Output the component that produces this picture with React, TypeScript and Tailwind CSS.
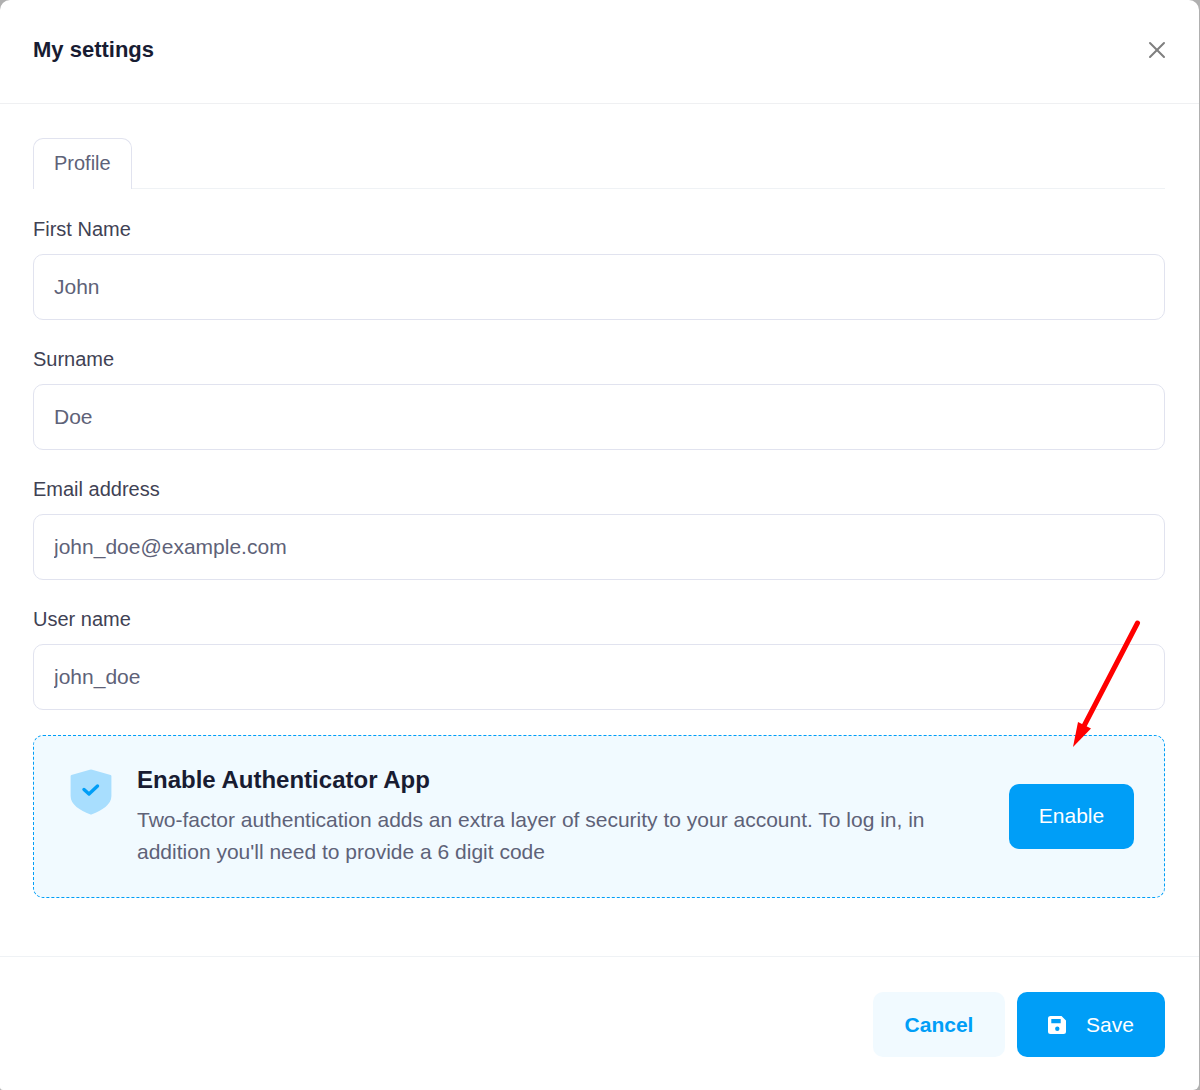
import { X } from "lucide-react";

type FieldProps = { id: string; label: string; value: string; type?: string };

function Field({ id, label, value, type = "text" }: FieldProps) {
  return (
    <div className="flex flex-col gap-2.5">
      <label htmlFor={id} className="text-[20px] leading-[30px] text-[#3f4254]">
        {label}
      </label>
      <input
        id={id}
        type={type}
        defaultValue={value}
        className="h-[66px] w-full rounded-[10px] border border-[#e1e3ef] bg-white px-5 text-[21px] text-[#5e6278] outline-none"
      />
    </div>
  );
}

function ShieldIcon() {
  return (
    <svg viewBox="0 0 42 46" className="h-[46px] w-[42px] shrink-0" aria-hidden="true">
      <path
        d="M.6 7Q.6 6.200 1.400 5.900L19.800 .7Q21 .3 22.200 .7L40.600 5.900Q41.400 6.200 41.400 7V27C41.400 36 32 41 22 45.300Q21 45.800 20 45.300C10 41 .6 36 .6 27Z"
        fill="#a8defe"
      />
      <path d="M14 20.500 19 25 27.500 17" fill="none" stroke="#009ef7" strokeWidth="3.400" strokeLinecap="round" strokeLinejoin="round" />
    </svg>
  );
}

function SaveIcon() {
  return (
    <svg viewBox="0 0 18 18" className="size-[18px]" aria-hidden="true">
      <path
        fill="currentColor"
        fillRule="evenodd"
        d="M2.500 0H13.500L18 4.500V15.500A2.500 2.500 0 0 1 15.500 18H2.500A2.500 2.500 0 0 1 0 15.500V2.500A2.500 2.500 0 0 1 2.500 0ZM3.300 3V7.300H12.700V3ZM9.300 10.600A2.200 2.200 0 1 0 9.300 15A2.200 2.200 0 1 0 9.300 10.600Z"
      />
    </svg>
  );
}

function PointerArrow() {
  return (
    <svg viewBox="0 0 70 128" className="pointer-events-none absolute right-[23px] -top-[117px] h-[128px] w-[70px]" aria-hidden="true">
      <path d="M66.500 4 13.500 106" stroke="#ff0000" strokeWidth="5" strokeLinecap="round" />
      <path d="M2 128 7 103 20 109.500Z" fill="#ff0000" />
    </svg>
  );
}

export default function App() {
  return (
    <div className="min-h-screen bg-[#b0b0b0] pr-px font-['Liberation_Sans',Arial,sans-serif]">
      <main className="flex min-h-screen flex-col rounded-t-[10px] rounded-br-[6px] rounded-bl-[3px] bg-white">
        <header className="flex h-[104px] items-center justify-between border-b border-[#eff0f2] pr-[34px] pl-[33px] pb-1">
          <h1 className="text-[22px] leading-7 font-bold text-[#181c32]">My settings</h1>
          <button type="button" aria-label="Close" className="-mr-1.5 text-[#7f7f7f]">
            <X className="size-7" strokeWidth={1.7} />
          </button>
        </header>

        <form className="flex flex-1 flex-col" onSubmit={(e) => e.preventDefault()}>
          <div className="flex-1 pr-[34px] pl-[33px] pt-[34px] pb-[58px]">
            <div role="tablist" className="flex border-b border-[#eff2f5]">
              <button
                type="button"
                role="tab"
                aria-selected="true"
                className="-mb-px h-[51px] rounded-t-[10px] border border-b-0 border-[#e1e3ef] bg-white px-5 pb-0.5 text-[20px] text-[#5e6278]"
              >
                Profile
              </button>
            </div>

            <div className="mt-[25px] flex flex-col gap-6">
              <Field id="first-name" label="First Name" value="John" />
              <Field id="surname" label="Surname" value="Doe" />
              <Field id="email" label="Email address" value="john_doe@example.com" type="email" />
              <Field id="user-name" label="User name" value="john_doe" />
            </div>

            <section className="relative mt-[25px] flex items-center rounded-[10px] border border-dashed border-[#009ef7] bg-[#f1faff] px-[30px] pt-[26px] pb-[29px]">
              <div className="flex flex-1 gap-[25px] pl-1.5">
                <div className="pt-[7px]">
                  <ShieldIcon />
                </div>
                <div className="max-w-[820px]">
                  <h2 className="text-[24px] leading-9 font-bold text-[#181c32]">Enable Authenticator App</h2>
                  <p className="mt-1.5 text-[21px] leading-8 text-[#5e6278]">
                    Two-factor authentication adds an extra layer of security to your account. To log in, in addition
                    you&apos;ll need to provide a 6 digit code
                  </p>
                </div>
              </div>
              <button type="button" className="mt-[3px] ml-10 h-[65px] w-[125px] shrink-0 rounded-[10px] bg-[#009ef7] pb-0.5 text-[21px] text-white">
                Enable
              </button>
              <PointerArrow />
            </section>
          </div>

          <footer className="flex justify-end gap-3 border-t border-[#eff2f5] pr-[34px] pl-[33px] pt-[35px] pb-[33px]">
            <button type="button" className="h-[65px] w-[132px] rounded-[10px] bg-[#f1faff] text-[21px] font-bold text-[#009ef7]">
              Cancel
            </button>
            <button type="submit" className="flex h-[65px] w-[148px] items-center justify-center gap-5 rounded-[10px] bg-[#009ef7] text-[21px] text-white">
              <SaveIcon />
              Save
            </button>
          </footer>
        </form>
      </main>
    </div>
  );
}
